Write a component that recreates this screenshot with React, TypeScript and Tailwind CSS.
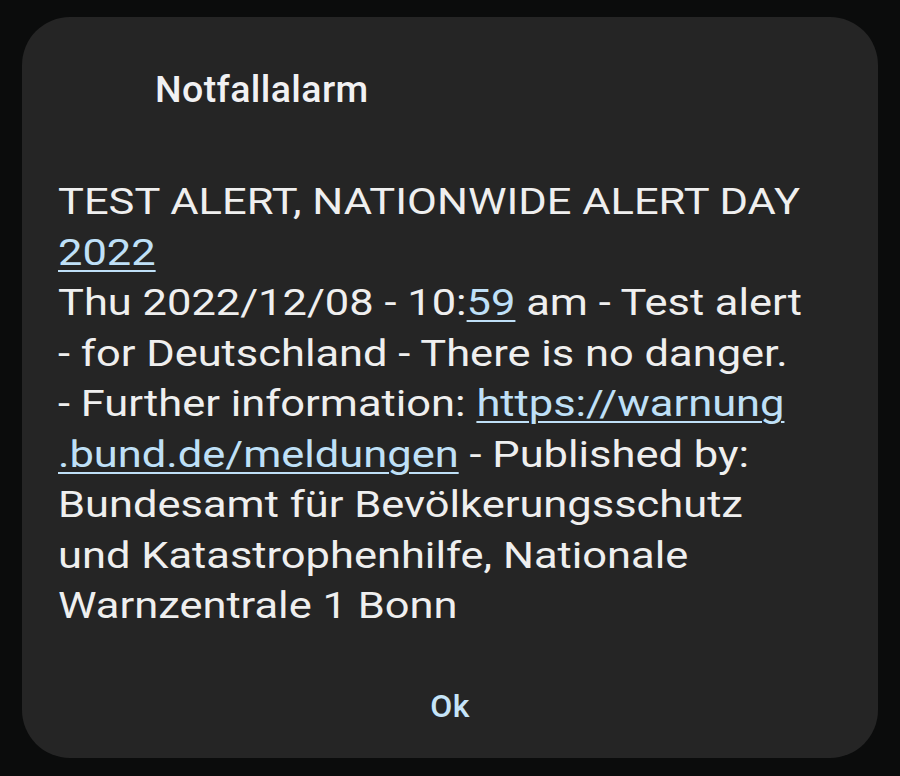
import React from 'react';

const Link: React.FC<{ children: React.ReactNode }> = ({ children }) => (
  <span className="text-[#bfe0f7] underline decoration-[2px] underline-offset-[5px]">{children}</span>
);

const App: React.FC = () => {
  return (
    <div className="w-[900px] h-[776px] bg-[#0b0c0c] pt-[17px] px-[22px] overflow-hidden" style={{ fontFamily: 'Roboto, "Noto Sans", sans-serif' }}>
      <div className="h-[741px] rounded-[48px] bg-[#252525] flex flex-col overflow-hidden">
        <h1 className="pl-[133px] pt-[50px] text-[37.5px] leading-[44px] font-medium tracking-[0.4px] text-[#f1f1f3]">Notfallalarm</h1>

        {/* message body: the source font runs wider than Roboto, so stretch it */}
        <div className="pl-[36px] pt-[66px]">
          <div className="origin-left scale-x-[1.19] text-[36.5px] leading-[50.5px] text-[#efefef] whitespace-nowrap">
            <div>TEST ALERT, NATIONWIDE ALERT DAY</div>
            <div><Link>2022</Link></div>
            <div>Thu 2022/12/08 - 10:<Link>59</Link> am - Test alert</div>
            <div>- for Deutschland - There is no danger.</div>
            <div>- Further information: <Link>https://warnung</Link></div>
            <div><Link>.bund.de/meldungen</Link> - Published by:</div>
            <div>Bundesamt für Bevölkerungsschutz</div>
            <div>und Katastrophenhilfe, Nationale</div>
            <div>Warnzentrale 1 Bonn</div>
          </div>
        </div>

        <div className="mt-auto pb-[32px] flex justify-center">
          <button className="text-[32px] leading-[40px] font-medium tracking-[0.5px] text-[#c6e4f8]">Ok</button>
        </div>
      </div>
    </div>
  );
};

export default App;
